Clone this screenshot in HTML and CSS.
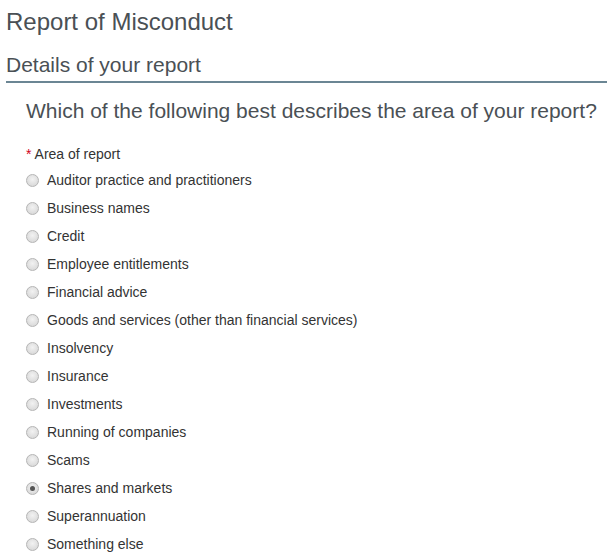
FILE: index.html
```html
<!DOCTYPE html>
<html>
<head>
<meta charset="utf-8">
<link rel="stylesheet" href="styles.css">
</head>
<body>
<div class="page">
  <h1 class="title">Report of Misconduct</h1>
  <h2 class="section">Details of your report</h2>
  <div class="panel">
    <h3 class="question">Which of the following best describes the area of your report?</h3>
    <div class="field-label"><span class="req">*</span> Area of report</div>
    <ul class="options">
      <li class="option"><span class="radio"></span><span class="opt-text">Auditor practice and practitioners</span></li>
      <li class="option"><span class="radio"></span><span class="opt-text">Business names</span></li>
      <li class="option"><span class="radio"></span><span class="opt-text">Credit</span></li>
      <li class="option"><span class="radio"></span><span class="opt-text">Employee entitlements</span></li>
      <li class="option"><span class="radio"></span><span class="opt-text">Financial advice</span></li>
      <li class="option"><span class="radio"></span><span class="opt-text">Goods and services (other than financial services)</span></li>
      <li class="option"><span class="radio"></span><span class="opt-text">Insolvency</span></li>
      <li class="option"><span class="radio"></span><span class="opt-text">Insurance</span></li>
      <li class="option"><span class="radio"></span><span class="opt-text">Investments</span></li>
      <li class="option"><span class="radio"></span><span class="opt-text">Running of companies</span></li>
      <li class="option"><span class="radio"></span><span class="opt-text">Scams</span></li>
      <li class="option"><span class="radio checked"></span><span class="opt-text">Shares and markets</span></li>
      <li class="option"><span class="radio"></span><span class="opt-text">Superannuation</span></li>
      <li class="option"><span class="radio"></span><span class="opt-text">Something else</span></li>
    </ul>
  </div>
</div>
</body>
</html>
```
FILE: styles.css
```css
html, body {
  margin: 0;
  padding: 0;
  background: #fff;
}
body {
  font-family: "Liberation Sans", Arial, sans-serif;
  color: #333;
}
.page {
  padding: 0 0 0 6px;
}
.title {
  margin: 0;
  padding-top: 8px;
  font-size: 24px;
  line-height: 28px;
  font-weight: normal;
  color: #4a5055;
}
.section {
  margin: 0;
  padding-top: 17px;
  padding-bottom: 4px;
  font-size: 21px;
  line-height: 24px;
  font-weight: normal;
  color: #4a5055;
  border-bottom: 2px solid #6b8694;
}
.panel {
  padding-left: 20px;
}
.question {
  margin: 0;
  padding-top: 16px;
  font-size: 21px;
  line-height: 24px;
  font-weight: normal;
  color: #4a5055;
}
.field-label {
  margin-top: 22px;
  font-size: 14px;
  line-height: 18px;
  color: #333;
}
.req {
  color: #d0021b;
}
.options {
  list-style: none;
  margin: 0;
  padding: 0;
}
.option {
  display: flex;
  align-items: center;
  height: 28px;
  font-size: 14px;
  color: #333;
}
.option:first-child {
  margin-top: 3px;
}
.radio {
  box-sizing: border-box;
  width: 13px;
  height: 13px;
  border-radius: 50%;
  border: 1px solid #b5b5b5;
  background: radial-gradient(circle at 50% 40%, #f2f2f2 0%, #dcdcdc 70%, #cfcfcf 100%);
  margin-right: 8px;
  flex: none;
  position: relative;
}
.radio.checked::after {
  content: "";
  position: absolute;
  left: 3px;
  top: 3px;
  width: 5px;
  height: 5px;
  border-radius: 50%;
  background: #555;
}
```
